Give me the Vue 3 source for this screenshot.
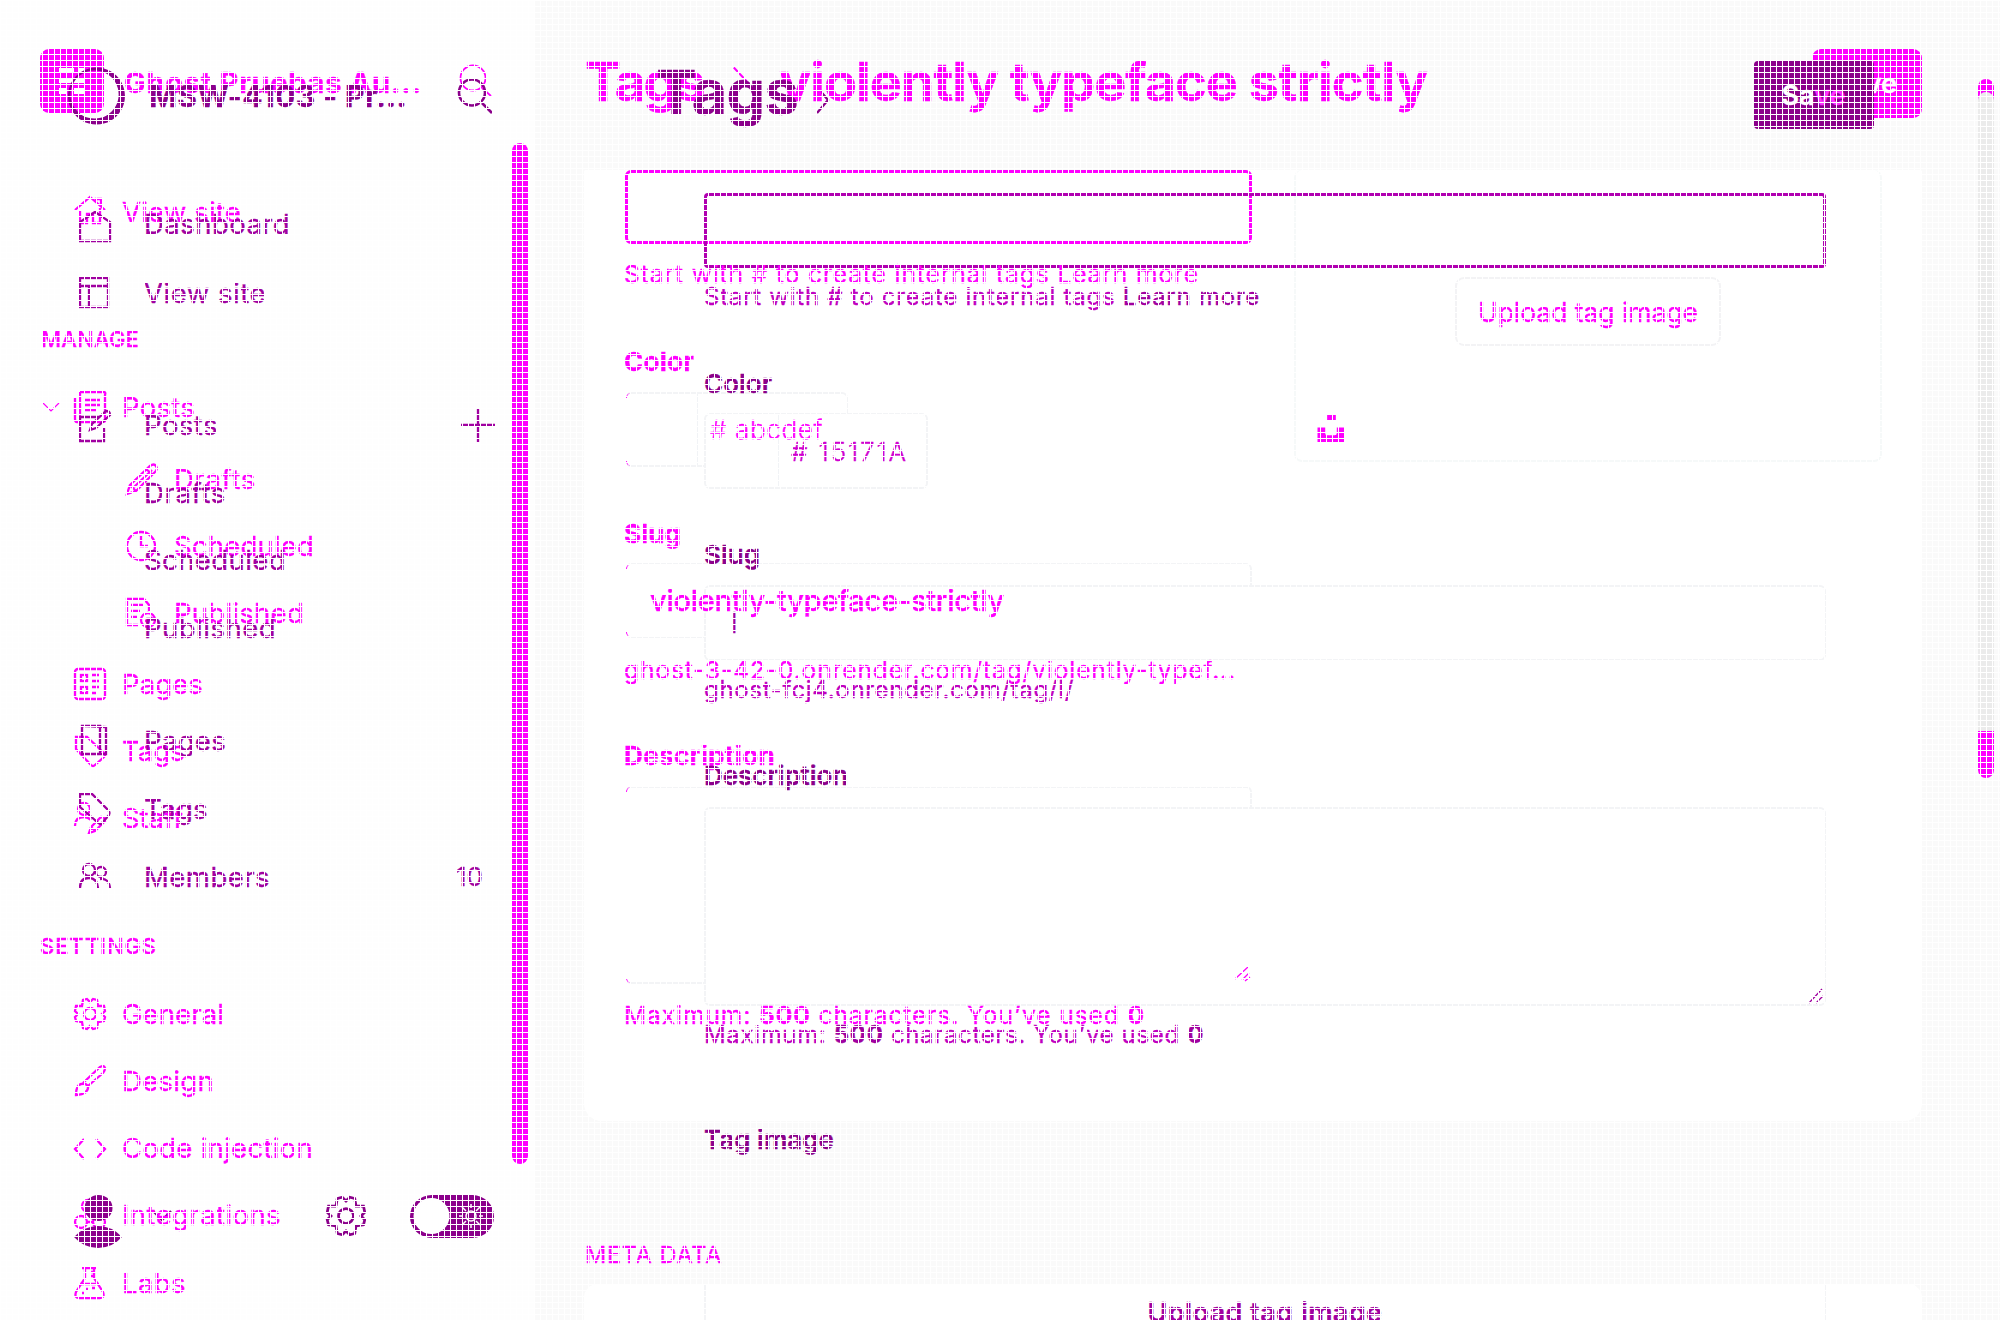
<script setup>
const icons = {
  home: '<path d="M1 14L16 1L31 14M6 15V27H13V18H19V27H26V12M22 6V3H27V10"/>',
  posts: '<path d="M6 1H30Q32 1 31 4V30Q31 31 28 31H3Q1 31 1 28V7M6 1V28Q5 31 3 31M11 9H26M11 14H26M11 19H22"/>',
  draft: '<path d="M4 22L24 3Q28 0 30 3Q32 6 29 9L10 28L1 31ZM4 22L10 28M8 24L26 7M20 6L27 12"/>',
  clock: '<circle cx="15" cy="16" r="14"/><path d="M15 6V16H22"/>',
  published: '<path d="M13 28H1V2H18L23 8V14M5 8H17M5 14H14M5 20H11"/><circle cx="22" cy="23" r="7"/><path d="M19 23L22 26L26 20"/>',
  pages: '<rect x="1" y="1" width="30" height="30" rx="3"/><rect x="7" y="7" width="6" height="6"/><rect x="7" y="19" width="6" height="6"/><path d="M18 7H25M18 13H25M18 19H25M18 25H23"/>',
  tag: '<path d="M2 2H13L30 18Q32 20 30 22L21 30Q19 32 17 30L2 14Z"/>',
  staff: '<circle cx="10" cy="7" r="6"/><path d="M1 24Q1 15 10 15Q14 15 17 18M15 31L17 25L27 15Q31 15 31 19L21 29ZM17 25L21 29"/>',
  gear: '<path d="M13 1L16 4L19 1L23 2L24 8L30 8L31 13L28 16L31 19L30 23L24 24L23 30L19 31L16 28L13 31L9 30L8 24L2 23L1 19L4 16L1 13L2 8L8 8L9 2Z"/><circle cx="16" cy="16" r="6"/>',
  brush: '<path d="M2 30Q2 20 7 19Q12 18 14 21Q15 29 2 30ZM9 18L26 2Q30 0 31 3Q31 6 29 8L14 21"/>',
  code: '<path d="M10 7L1 17L10 27M22 7L31 17L22 27"/>',
  webhook: '<circle cx="7" cy="23" r="6"/><circle cx="25" cy="23" r="6"/><circle cx="14" cy="7" r="6"/><path d="M13 23H19M10 18L13 12M18 11L23 17"/>',
  flask: '<path d="M8 1H22M11 1V11L2 25Q0 31 5 31H26Q31 31 29 25L20 11V1M16 5H20M16 9H20M6 17H25M12 22H14M18 21H21M8 26H10"/>',
  house2: '<path d="M1 12V31H31V12L16 2Z"/>',
  layout: '<rect x="1" y="1" width="28" height="29"/><path d="M1 9H29M10 9V30"/>',
  compose: '<path d="M20 8H1V32H25V19M11 21L13 15L27 2Q31 2 31 6L17 19Z"/>',
  pages2: '<path d="M3 1H21V29H3ZM8 1L27 2V29H22"/>',
  tag2: '<path d="M1 1H13L30 18Q31 20 30 22L22 31Q20 31 17 28L1 14Z"/>',
  members: '<circle cx="10" cy="9" r="6"/><circle cx="22" cy="11" r="5"/><path d="M1 27Q1 17 10 17Q18 17 19 27M21 18Q30 17 31 27"/>'
}

const navBack = [
  { t: 'View site', i: 'home', w: 119, gap: 0, x: 122 },
  { t: 'MANAGE', head: true, w: 98, gap: 61, x: 41 },
  { t: 'Posts', i: 'posts', w: 73, gap: 2, x: 122, caret: true },
  { t: 'Drafts', i: 'draft', w: 82, gap: 6, x: 174 },
  { t: 'Scheduled', i: 'clock', w: 140, gap: 1, x: 174 },
  { t: 'Published', i: 'published', w: 130, gap: 1, x: 174 },
  { t: 'Pages', i: 'pages', w: 81, gap: 5, x: 122 },
  { t: 'Tags', i: 'tag', w: 63, gap: 1, x: 122 },
  { t: 'Staff', i: 'staff', w: 61, gap: 1, x: 122 },
  { t: 'SETTINGS', head: true, w: 117, gap: 62, x: 40 },
  { t: 'General', i: 'gear', w: 102, gap: 2, x: 122 },
  { t: 'Design', i: 'brush', w: 92, gap: 1, x: 122 },
  { t: 'Code injection', i: 'code', w: 191, gap: 1, x: 122 },
  { t: 'Integrations', i: 'webhook', w: 159, gap: 1, x: 122 },
  { t: 'Labs', i: 'flask', w: 64, gap: 2, x: 122 }
]

const navFront = [
  { t: 'Dashboard', i: 'house2', w: 146, gap: 0 },
  { t: 'View site', i: 'layout', w: 122, gap: 3 },
  { t: 'Posts', i: 'compose', w: 74, gap: 66, plus: true },
  { t: 'Drafts', w: 82, gap: 2 },
  { t: 'Scheduled', w: 142, gap: 1 },
  { t: 'Published', w: 132, gap: 2 },
  { t: 'Pages', i: 'pages2', w: 82, gap: 47 },
  { t: 'Tags', i: 'tag2', w: 64, gap: 2 },
  { t: 'Members', i: 'members', w: 126, gap: 2, count: '10' }
]

// Spreads a label's letters so that it spans the given number of pixels.
const vFit = {
  mounted(el, { value }) {
    const n = el.textContent.length
    const natural = el.getBoundingClientRect().width
    el.style.letterSpacing = (value - natural) / n + 'px'
  }
}
</script>

<template>
  <div class="screen">
    <div class="layer back">
      <aside class="side">
        <header class="brand">
          <svg class="logo" viewBox="0 0 64 64"><rect width="64" height="64" rx="9" /><path class="cut" d="M19 19H34V24H19ZM38 19H45V24H38ZM19 30H45V34H19ZM19 39H27V45H19ZM34 39H45V45H34Z" /></svg>
          <span v-fit="298" class="brand-name at">Ghost Pruebas Au...</span>
          <svg class="find" viewBox="0 0 34 34"><circle cx="14" cy="14" r="12.5" /><path d="M23 24L32 32" /></svg>
        </header>
        <nav>
          <div v-for="n in navBack" :key="n.t" class="row" :class="{ head: n.head }" :style="{ marginTop: n.gap + 'px' }">
            <span class="lead" :style="{ width: n.x + 'px' }">
              <svg v-if="n.caret" class="caret" viewBox="0 0 18 10"><path d="M1 1L9 9L17 1" /></svg>
              <svg v-if="n.i" class="ico" viewBox="0 0 32 32" v-html="icons[n.i]" />
            </span>
            <span v-fit="n.w" class="at">{{ n.t }}</span>
          </div>
        </nav>
      </aside>

      <main class="main">
        <header class="top">
          <span v-fit="118" class="at">Tags</span>
          <svg class="chev" viewBox="0 0 20 34"><path d="M2 2L16 17L2 32" /></svg>
          <span v-fit="648" class="at">violently typeface strictly</span>
          <span class="save">Save</span>
        </header>
        <section class="card">
          <div class="fields">
            <div class="box focus"></div>
            <p class="help at"><span v-fit="575">Start with # to create internal tags Learn more</span></p>
            <p class="label at l1"><span v-fit="70">Color</span></p>
            <div class="box color"><i class="swatch"></i><span v-fit="113" class="at hex">#&nbsp;abcdef</span></div>
            <p class="label at l2"><span v-fit="57">Slug</span></p>
            <div class="box slug"><span v-fit="354" class="at">violently-typeface-strictly</span></div>
            <p class="help at h2"><span v-fit="612">ghost-3-42-0.onrender.com/tag/violently-typef...</span></p>
            <p class="label at l3"><span v-fit="151">Description</span></p>
            <div class="box area"><svg class="grip at" viewBox="0 0 16 16"><path d="M1 13L14 1M8 14L15 7M11 15L16 11" /></svg></div>
            <p class="help at h3"><span v-fit="521">Maximum: <b>500</b> characters. You’ve used <b>0</b></span></p>
          </div>
          <div class="image">
            <span class="upload"><span v-fit="220" class="at">Upload tag image</span></span>
            <svg class="unsplash" viewBox="0 0 28 28"><path d="M10 0H19V6H10ZM0 13H8V19Q8 21 10 21H18Q20 21 20 19V13H28V28H0Z" /></svg>
          </div>
        </section>
        <h2 class="meta"><span v-fit="137">META DATA</span></h2>
        <section class="card second"></section>
      </main>
    </div>

    <div class="layer front">
      <aside class="side">
        <header class="brand">
          <svg class="ring" viewBox="0 0 58 58"><path fill-rule="evenodd" d="M29 0A29 29 0 1 1 28.900 0ZM27 3A24.500 24.500 0 1 0 27.100 3Z" /></svg>
          <span v-fit="258" class="brand-name bt">MSW-4103 - Pr...</span>
          <svg class="find" viewBox="0 0 36 36"><circle cx="15" cy="14.500" r="13" /><path d="M25 25L35 35" /></svg>
        </header>
        <nav>
          <div v-for="n in navFront" :key="n.t" class="row" :style="{ marginTop: n.gap + 'px' }">
            <span class="lead"><svg v-if="n.i" :class="['ico', n.i]" viewBox="0 0 32 32" v-html="icons[n.i]" /></span>
            <span v-fit="n.w" class="bt">{{ n.t }}</span>
            <svg v-if="n.plus" class="plus" viewBox="0 0 34 34"><path d="M17 0V34M0 17H34" /></svg>
            <span v-if="n.count" class="count">{{ n.count }}</span>
          </div>
        </nav>
        <footer class="foot">
          <svg class="avatar" viewBox="0 0 48 54"><ellipse cx="24.500" cy="13" rx="14" ry="13" /><path d="M0 42Q10 31 24 31Q38 31 48 42Q38 53 24 53Q10 53 0 42Z" /></svg>
          <svg class="down" viewBox="0 0 22 12"><path d="M2 1L11 10L20 1" /></svg>
          <svg class="cog" viewBox="0 0 32 32" v-html="icons.gear" />
          <svg class="toggle" viewBox="0 0 84 43"><rect width="84" height="43" rx="21.500" /><circle class="cut" cx="21.500" cy="21" r="18" /><g class="sun"><circle cx="61" cy="21" r="5" /><path d="M61 9V13M61 29V33M49 21H53M69 21H73M52 12L56 16M66 26L70 30M70 12L66 16M56 26L52 30" /></g></svg>
        </footer>
      </aside>

      <main class="main">
        <header class="top">
          <span v-fit="142" class="bt">Tags</span>
          <svg class="chev" viewBox="0 0 16 28"><path d="M2 1L13 14L2 27" /></svg>
          <span class="save"><span v-fit="64"><span>Sa</span><span class="tint">ve</span></span></span>
        </header>
        <div class="fields">
          <div class="box focus"></div>
          <p class="help bt"><span v-fit="556">Start with # to create internal tags <em>Learn more</em></span></p>
          <p class="label bt l1"><span v-fit="68">Color</span></p>
          <div class="box color"><i class="swatch"></i><span v-fit="117" class="bt hex">#&nbsp;15171A</span></div>
          <p class="label bt l2"><span v-fit="56">Slug</span></p>
          <div class="box slug"><span class="bt">l</span></div>
          <p class="help bt h2"><span v-fit="370">ghost-fcj4.onrender.com/tag/l/</span></p>
          <p class="label bt l3"><span v-fit="144">Description</span></p>
          <div class="box area"><svg class="grip bt" viewBox="0 0 16 16"><path d="M1 15L14 1M8 15L15 8" /></svg></div>
          <p class="help bt h3"><span v-fit="500">Maximum: <b>500</b> characters. You’ve used <b>0</b></span></p>
          <p class="label bt l4"><span v-fit="130">Tag image</span></p>
          <div class="drop"><span v-fit="235">Upload tag image</span></div>
        </div>
      </main>
    </div>

    <div class="bar left"></div>
    <div class="bar right"><i></i></div>
    <div class="mesh"></div>
  </div>
</template>

<style>
body { margin: 0; overflow: hidden; }
</style>

<style scoped>
.screen { position: relative; width: 2000px; height: 1320px; overflow: hidden; background: #fff; font-family: Inter, sans-serif; -webkit-text-stroke: 0.35px; }
.layer { position: absolute; inset: 0; display: flex; }
.side { width: 535px; flex: none; background: #fefefe; }
.main { flex: 1; background: #fafafa; }
.front .side, .front .main { background: none; }
p, h2 { margin: 0; }
svg { display: block; overflow: visible; fill: none; stroke: currentColor; stroke-width: 2.3; flex: none; }
.back { color: #f0f; }
.front { color: #a000a0; }
.at { position: relative; z-index: 2; }
.bt { position: relative; z-index: 3; }
.cut { fill: #fff; stroke: none; }

.brand { display: flex; align-items: center; box-sizing: border-box; white-space: nowrap; }
.brand-name { font-weight: 700; font-size: 29px; }
.back .brand { height: 179px; padding: 0 0 15px 40px; }
.logo { width: 64px; height: 64px; fill: #f0f; stroke: none; margin: 0 20px 2px 0; }
.find { width: 34px; height: 34px; margin-left: auto; }
.back .find { margin-right: 42px; margin-bottom: 3px; stroke-width: 1.8; }
.front .brand { height: 191px; color: #8b008b; padding-left: 68px; }
.front .brand-name { font-size: 30px; }
.ring { width: 57px; height: 58px; fill: #8b008b; stroke: none; margin-right: 24px; }
.front .find { width: 36px; height: 36px; margin-right: 42px; stroke-width: 2.6; }

.row { display: flex; align-items: center; height: 66px; font-size: 27.500px; line-height: 66px; white-space: nowrap; }
.head { font-size: 22px; font-weight: 500; }
.lead { display: flex; align-items: center; justify-content: flex-end; flex: none; box-sizing: border-box; padding-right: 16px; }
.ico { width: 32px; height: 32px; }
.caret { width: 18px; height: 10px; margin-right: 14px; stroke-width: 1.2; }
.front .lead { width: 144px; justify-content: flex-start; padding: 0 0 0 79px; }
.front .house2 { padding-top: 4px; }
.plus { width: 34px; height: 34px; margin-left: auto; margin-right: 40px; }
.count { margin-left: auto; margin-right: 52px; font-size: 26px; }
.foot { display: flex; align-items: flex-start; color: #8b008b; margin-top: 285px; padding-left: 74px; }
.avatar { width: 48px; height: 54px; fill: #8b008b; stroke: none; }
.down { width: 22px; height: 12px; margin: 15px 0 0 29px; }
.cog { width: 40px; height: 40px; margin: 1px 0 0 153px; stroke-width: 2.2; }
.toggle { width: 84px; height: 43px; margin-left: 44px; fill: #8b008b; stroke: none; }
.sun { fill: none; stroke: #fff; stroke-width: 1.5; }

.top { display: flex; align-items: center; box-sizing: border-box; font-weight: 700; font-size: 54px; white-space: nowrap; }
.back .top { height: 170px; padding: 0 78px 8px 50px; }
.back .chev { width: 18px; height: 32px; margin: 0 29px 0 29px; }
.save { display: flex; align-items: center; justify-content: center; box-sizing: border-box; margin-left: auto; color: #fff; font-size: 27px; font-weight: 600; }
.back .save { width: 110px; height: 69px; border-radius: 9px; background: #f0f; justify-content: flex-end; padding-right: 25px; margin-top: 5px; }
.front .top { height: 193px; padding: 0 126px 10px 121px; font-size: 61px; color: #8b008b; }
.front .chev { width: 16px; height: 28px; margin: 17px 0 0 17px; }
.front .save { position: relative; z-index: 3; width: 120px; height: 68px; border-radius: 4px; background: #8b008b; margin-top: 7px; padding-right: 1px; }
.tint { color: #ff30ff; }

.card { display: flex; box-sizing: border-box; width: 1338px; height: 951px; margin-left: 49px; background: #fff; border-radius: 2px 2px 18px 18px; padding: 0 0 0 41px; }
.back .fields { width: 627px; }
.front .fields { width: 1122px; margin-left: 169px; }
.box { position: relative; z-index: 1; box-sizing: border-box; border: 2px solid #f3f4f6; border-radius: 6px; height: 75px; display: flex; align-items: center; }
.front .box { background: #fff; }
.front .box.focus { background: none; border: 3px solid #b000b0; border-radius: 4px; }
.back .box { z-index: auto; }
.back .box:not(.focus) { border-left-color: transparent; }
.back .box.focus { height: 74px; border: 3px solid #f0f; }
.back .box:not(.focus)::before, .back .box:not(.focus)::after { content: ""; position: absolute; left: -1px; width: 4px; height: 5px; border-left: 1.500px solid #f0f; }
.back .box::before { top: -1px; border-top-left-radius: 5px; }
.back .box::after { bottom: -1px; border-bottom-left-radius: 5px; }
.help, .label { height: 30px; line-height: 30px; white-space: nowrap; }
.help { font-size: 24.500px; }
.label { font-size: 26px; font-weight: 600; }
.back .label { font-weight: 700; }
.back .help, .back .label { left: -1px; }
.back .help { margin-top: 15px; height: 30px; }
.back .l1 { margin-top: 58px; }
.back .color { margin-top: 15px; width: 223px; }
.back .l2 { margin-top: 52px; }
.back .slug { margin-top: 14px; }
.back .h2 { margin-top: 17px; height: 30px; }
.back .l3 { margin-top: 56px; }
.back .area { margin-top: 15px; height: 198px; }
.back .h3 { margin-top: 16px; height: 30px; }
.swatch { width: 71px; height: 100%; box-sizing: border-box; border-right: 1px solid #f1f3f6; flex: none; }
.hex { font-size: 26px; font-weight: 300; white-space: nowrap; margin-left: 12px; }
.slug { padding-left: 23px; font-size: 29px; white-space: nowrap; }
.slug span { font-weight: 500; }
.area { align-items: flex-end; justify-content: flex-end; }
.grip { width: 16px; height: 16px; stroke-width: 1.3; }

.front .label { color: #8b008b; }
.front .help { margin-top: 14px; height: 29px; color: #c000c0; font-size: 24px; }
.front .help em, .front .help b { font-style: normal; color: #a000a0; }
.front .l1 { margin-top: 58px; }
.front .color { margin-top: 14px; width: 224px; height: 76px; }
.front .swatch { width: 73px; }
.front .hex { color: #d000d0; margin-top: 1px; }
.front .l2 { margin-top: 51px; }
.front .slug { margin-top: 15px; height: 76px; padding-left: 25px; }
.front .slug span { font-weight: 300; font-size: 28px; }
.front .l3 { margin-top: 57px; }
.front .area { margin-top: 16px; height: 199px; }
.front .l4 { margin-top: 76px; }
.drop { position: relative; z-index: 1; box-sizing: border-box; height: 60px; margin-top: 130px; border: solid #f3f4f6; border-width: 0 2px; text-align: center; font-size: 27px; line-height: 56px; font-weight: 600; }

.image { display: flex; flex-direction: column; align-items: center; box-sizing: border-box; width: 588px; height: 292px; margin-left: 42px; padding-top: 107px; border: 2px solid #f6f9f9; border-top: 0; border-radius: 8px; }
.upload { display: flex; align-items: center; justify-content: center; box-sizing: border-box; width: 266px; height: 69px; border: 2px solid #f3f3f5; border-radius: 9px; font-size: 26.500px; white-space: nowrap; }
.unsplash { width: 28px; height: 27px; fill: #f0f; stroke: none; align-self: flex-start; margin: 69px 0 0 21px; }
.meta { margin: 119px 0 0 50px; height: 30px; line-height: 30px; font-size: 23.500px; font-weight: 400; white-space: nowrap; }
.second { margin-top: 14px; height: 60px; border-radius: 14px 14px 0 0; }

.bar { position: absolute; z-index: 4; width: 16px; border-radius: 8px; background: #f0f; }
.left { left: 512px; top: 143px; height: 1021px; }
.right { left: 1978px; top: 79px; height: 699px; }
.right i { display: block; height: 639px; margin-top: 13px; background: #ebebeb; border-radius: 8px 8px 0 0; }
.mesh { position: absolute; inset: 0; z-index: 9; background: repeating-linear-gradient(90deg, #fff 0 1px, transparent 1px 6px), repeating-linear-gradient(#fff 0 1px, transparent 1px 6px); }
</style>
